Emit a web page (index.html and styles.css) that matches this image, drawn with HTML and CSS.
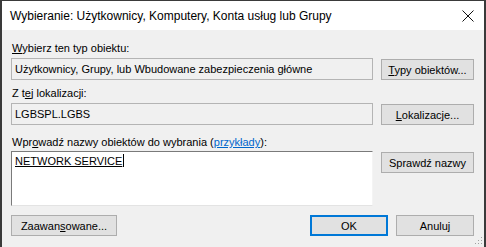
FILE: index.html
```html
<!DOCTYPE html>
<html lang="pl">
<head>
    <meta charset="UTF-8">
    <title>Wybieranie: Użytkownicy, Komputery, Konta usług lub Grupy</title>
    <link rel="stylesheet" href="styles.css">
</head>
<body>
    <div class="window">
        <div class="titlebar">
            <span class="title">Wybieranie: Użytkownicy, Komputery, Konta usług lub Grupy</span>
            <svg class="close" width="12" height="12" viewBox="0 0 12 12">
                <path d="M0.5 0.5 L11.5 11.5 M11.5 0.5 L0.5 11.5" stroke="#111" stroke-width="1" fill="none"/>
            </svg>
        </div>
        <div class="content">
            <div class="label first"><u>W</u>ybierz ten typ obiektu:</div>
            <div class="row">
                <div class="field">Użytkownicy, Grupy, lub Wbudowane zabezpieczenia główne</div>
                <button class="btn"><u>T</u>ypy obiektów...</button>
            </div>

            <div class="label second">Z t<u>e</u>j lokalizacji:</div>
            <div class="row">
                <div class="field">LGBSPL.LGBS</div>
                <button class="btn"><u>L</u>okalizacje...</button>
            </div>

            <div class="label third">Wpr<u>o</u>wadź nazwy obiektów do wybrania (<a href="#" class="link">przykłady</a>):</div>
            <div class="row">
                <div class="names"><span class="resolved">NETWORK SERVICE</span><span class="caret"></span></div>
                <button class="btn">Sprawdź nazwy</button>
            </div>

            <div class="footer">
                <button class="btn wide">Zaawan<u>s</u>owane...</button>
                <div class="actions">
                    <button class="btn default">OK</button>
                    <button class="btn">Anuluj</button>
                </div>
            </div>
        </div>
        <svg class="grip" width="8" height="8" viewBox="0 0 8 8">
            <rect x="6" y="0" width="1" height="1" fill="#a0a0a0"/>
            <rect x="3" y="3" width="1" height="1" fill="#a0a0a0"/>
            <rect x="6" y="3" width="1" height="1" fill="#a0a0a0"/>
            <rect x="0" y="6" width="1" height="1" fill="#a0a0a0"/>
            <rect x="3" y="6" width="1" height="1" fill="#a0a0a0"/>
            <rect x="6" y="6" width="1" height="1" fill="#a0a0a0"/>
        </svg>
    </div>
</body>
</html>
```

FILE: styles.css
```css
body {
    margin: 0;
    padding: 0;
    font-family: "Liberation Sans", Arial, sans-serif;
    font-size: 11px;
    color: #000;
    background: #f0f0f0;
}
.window {
    position: relative;
    width: 486px;
    height: 247px;
    box-sizing: border-box;
    border-top: 1px solid #3a3a3a;
    border-left: 2px solid #3a3a3a;
    border-right: 2px solid #3a3a3a;
    background: #f0f0f0;
    overflow: hidden;
}
.titlebar {
    height: 29px;
    background: #fff;
    display: flex;
    align-items: center;
    justify-content: space-between;
    padding: 0 10px 0 8px;
}
.title {
    font-size: 12px;
    margin-top: 1px;
}
.close {
    display: block;
    margin-top: 1px;
}
.content {
    padding: 0 10px 0 9px;
}
.label {
    line-height: 14px;
    height: 14px;
    padding-left: 1px;
}
.label.first {
    margin-top: 11px;
    margin-bottom: 3px;
}
.label.second {
    margin-top: 6px;
    margin-bottom: 3px;
}
.label.third {
    margin-top: 10px;
    margin-bottom: 2px;
}
.row {
    display: grid;
    grid-template-columns: 362px 93px;
    column-gap: 8px;
    align-items: start;
}
.field {
    height: 22px;
    box-sizing: border-box;
    border: 1px solid #b4b4b4;
    background: #f0f0f0;
    padding: 0 3px;
    line-height: 20px;
    white-space: nowrap;
    overflow: hidden;
}
.names {
    height: 55px;
    box-sizing: border-box;
    border-top: 1px solid #7a7a7a;
    border-left: 1px solid #7a7a7a;
    border-right: 1px solid #f4f4f4;
    border-bottom: 1px solid #e3e3e3;
    background: #fff;
    padding: 2px 3px;
    line-height: 14px;
}
.resolved {
    text-decoration: underline;
}
.caret {
    display: inline-block;
    width: 1px;
    height: 13px;
    background: #000;
    vertical-align: -2px;
    margin-left: 1px;
}
.btn {
    height: 21px;
    margin-top: 1px;
    box-sizing: border-box;
    border: 1px solid #adadad;
    background: #e1e1e1;
    font-family: inherit;
    font-size: 11px;
    color: #000;
    padding: 0;
    cursor: pointer;
}
.btn.default {
    border: 2px solid #0078d7;
}
.link {
    color: #0066cc;
}
.footer {
    display: flex;
    justify-content: space-between;
    margin-top: 9px;
}
.footer .btn {
    margin-top: 0;
}
.btn.wide {
    width: 106px;
}
.actions {
    display: flex;
    gap: 8px;
}
.actions .btn {
    width: 78px;
}
.grip {
    position: absolute;
    right: 1px;
    bottom: 2px;
}
```
